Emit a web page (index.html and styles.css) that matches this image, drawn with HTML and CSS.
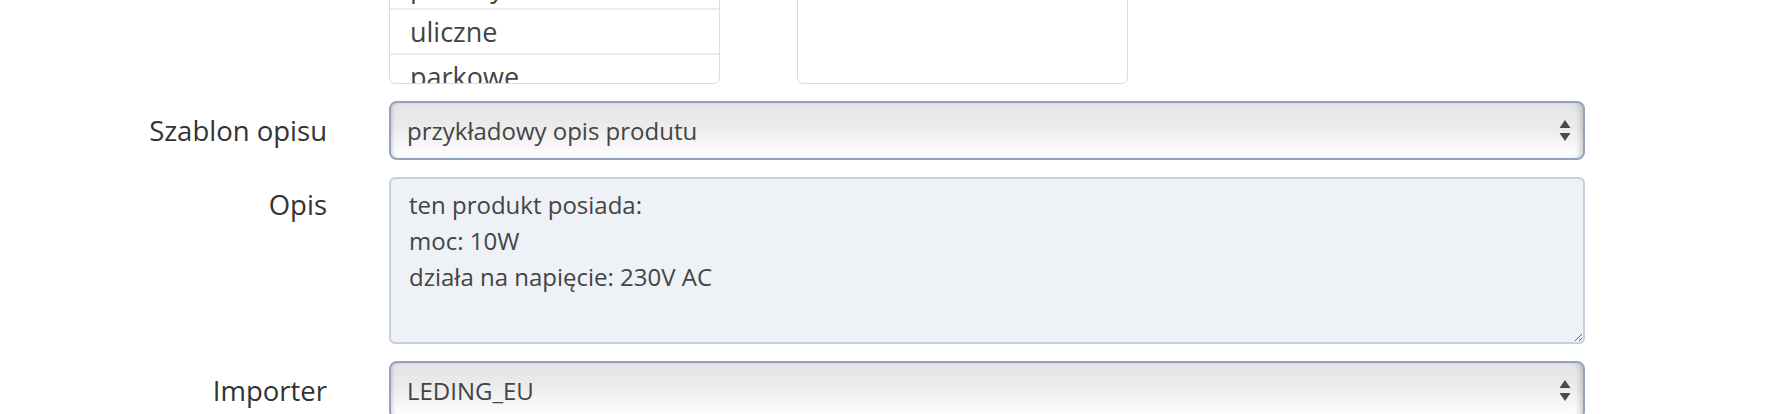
FILE: index.html
```html
<!DOCTYPE html>
<html lang="pl">
<head>
<meta charset="utf-8">
<title>Formularz produktu</title>
<link rel="stylesheet" href="styles.css">
</head>
<body>
<form class="form">
  <div class="row row-lists">
    <div class="label"></div>
    <div class="controls lists">
      <div class="listbox">
        <div class="list-inner">
          <div class="opt">przemysłowe</div>
          <div class="opt">uliczne</div>
          <div class="opt">parkowe</div>
        </div>
      </div>
      <div class="listbox"></div>
    </div>
  </div>
  <div class="row row-select">
    <label class="label">Szablon opisu</label>
    <div class="controls">
      <div class="select-wrap">
        <select class="select"><option>przykładowy opis produtu</option></select>
        <svg class="arrows" width="12" height="22" viewBox="0 0 12 22"><path d="M6 0 L11.5 8 L0.5 8 Z M0.5 13 L11.5 13 L6 21 Z" fill="#4a4a4a"/></svg>
      </div>
    </div>
  </div>
  <div class="row row-text">
    <label class="label label-top">Opis</label>
    <div class="controls">
      <textarea class="textarea">ten produkt posiada:
moc: 10W
działa na napięcie: 230V AC</textarea>
    </div>
  </div>
  <div class="row row-select">
    <label class="label">Importer</label>
    <div class="controls">
      <div class="select-wrap">
        <select class="select"><option>LEDING_EU</option></select>
        <svg class="arrows" width="12" height="22" viewBox="0 0 12 22"><path d="M6 0 L11.5 8 L0.5 8 Z M0.5 13 L11.5 13 L6 21 Z" fill="#4a4a4a"/></svg>
      </div>
    </div>
  </div>
</form>
</body>
</html>
```
FILE: styles.css
```css
html, body {
  margin: 0;
  padding: 0;
  background: #fff;
  overflow: hidden;
}
body {
  font-family: "Open Sans", "Noto Sans", sans-serif;
  color: #333;
}
.form {
  display: flex;
  flex-direction: column;
  gap: 17px;
  margin-top: -60px;
}
.row {
  display: flex;
  align-items: center;
  gap: 62px;
}
.row-text {
  align-items: flex-start;
}
.label {
  width: 327px;
  flex: none;
  text-align: right;
  font-size: 27.5px;
  line-height: 38px;
  color: #333;
}
.label-top {
  padding-top: 9px;
}
.controls {
  width: 1196px;
  flex: none;
}
.lists {
  display: flex;
  gap: 77px;
}
.listbox {
  width: 331px;
  height: 144px;
  border: 1px solid #dcdcdc;
  border-radius: 6px;
  overflow: hidden;
  box-sizing: border-box;
}
.list-inner {
  margin-top: 24px;
}
.opt {
  height: 43px;
  border-bottom: 2px solid #ececec;
  padding-left: 20px;
  font-size: 27px;
  line-height: 43px;
  color: #444;
}
.select-wrap {
  position: relative;
}
.select {
  appearance: none;
  -webkit-appearance: none;
  width: 100%;
  height: 59px;
  box-sizing: border-box;
  border: 2px solid #93a3bd;
  border-radius: 8px;
  padding: 0 0 0 16px;
  font-family: "Open Sans", "Noto Sans", sans-serif;
  font-size: 24px;
  color: #444;
  background: linear-gradient(#e4e4e4, #ececec 45%, #f8f8f8 80%, #ffffff);
  box-shadow: inset 3px 0 4px -2px rgba(0,0,0,0.18), inset -6px 0 6px -4px rgba(0,0,0,0.22);
  outline: none;
}
.arrows {
  position: absolute;
  right: 14px;
  top: 19px;
}
.textarea {
  display: block;
  width: 100%;
  height: 167px;
  box-sizing: border-box;
  border: 2px solid #c6cfdf;
  border-radius: 6px;
  background: #eef1f6;
  padding: 8px 18px;
  font-family: "Open Sans", "Noto Sans", sans-serif;
  font-size: 24px;
  line-height: 36px;
  color: #444;
  resize: vertical;
  outline: none;
}
```
